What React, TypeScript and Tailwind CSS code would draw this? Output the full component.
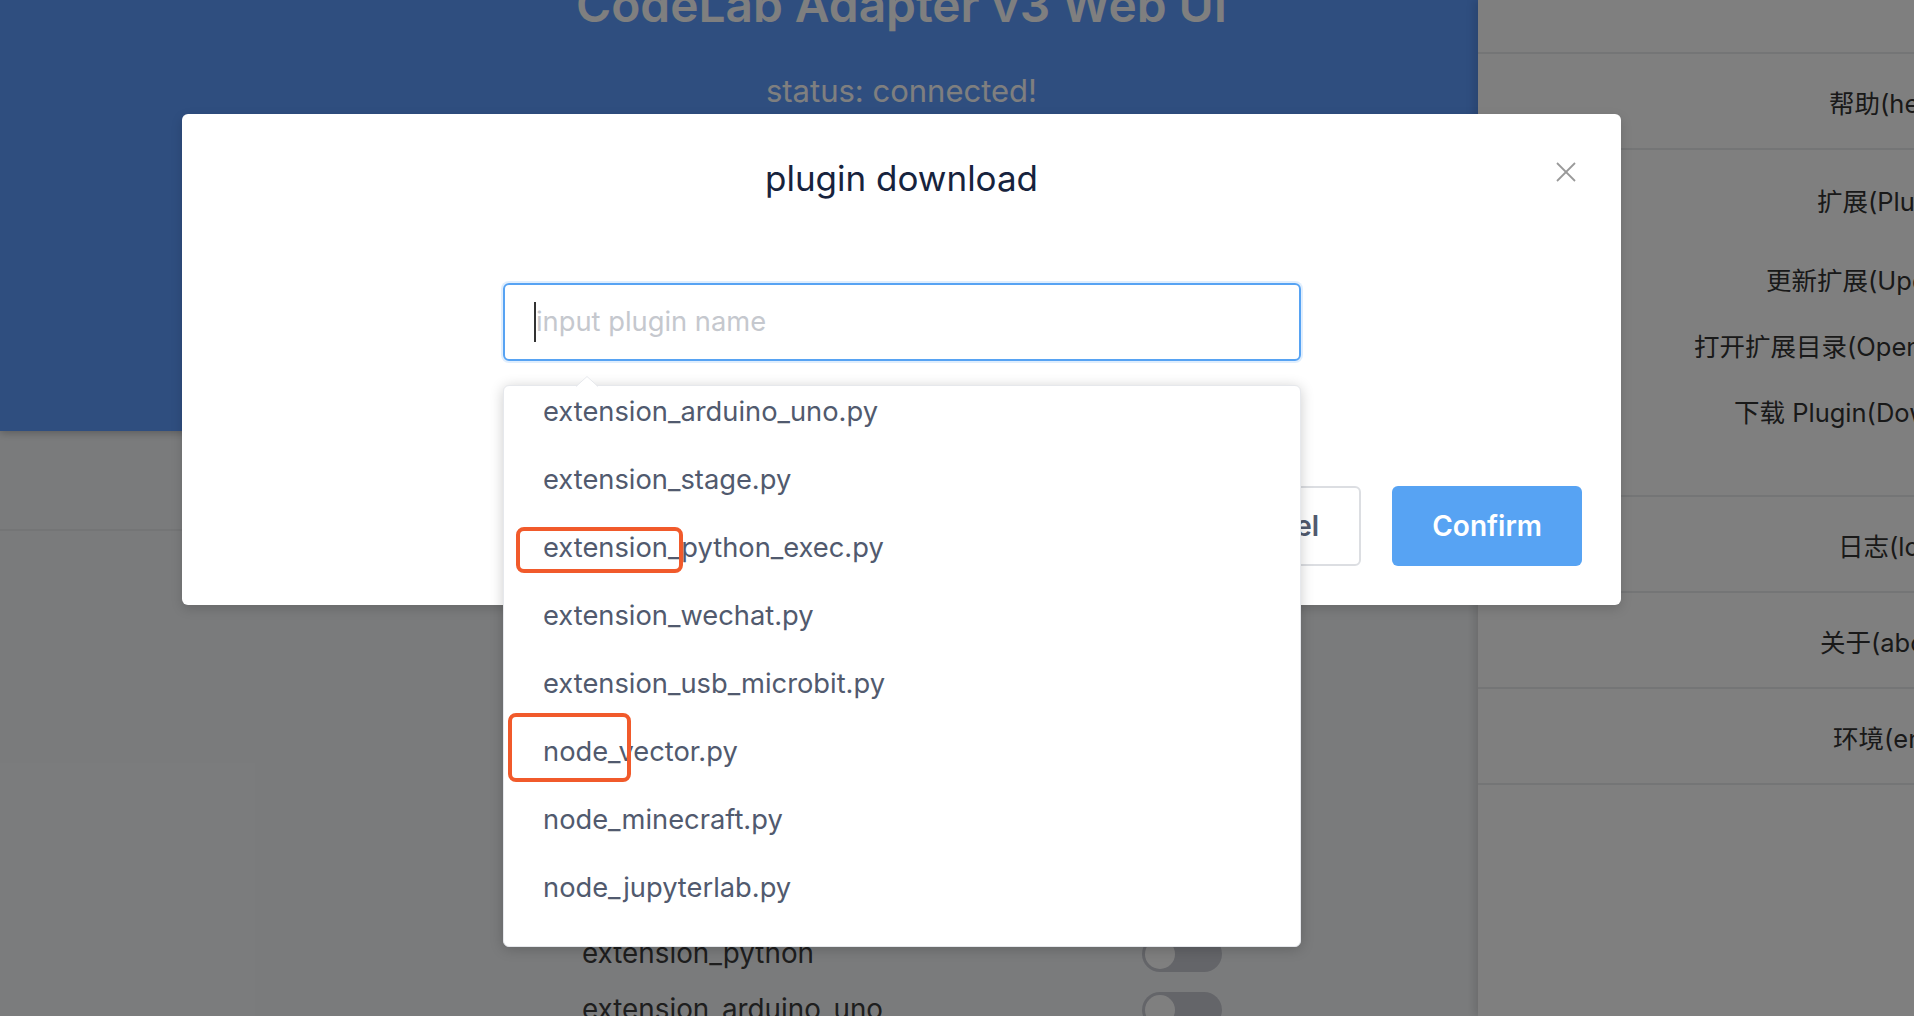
import React from "react";

const suggestions = [
  "extension_arduino_uno.py",
  "extension_stage.py",
  "extension_python_exec.py",
  "extension_wechat.py",
  "extension_usb_microbit.py",
  "node_vector.py",
  "node_minecraft.py",
  "node_jupyterlab.py",
];

const bgRows = [
  "extension_webUI_manager",
  "extension_eim",
  "extension_microbit",
  "extension_usb_microbit",
  "extension_stage",
  "extension_wechat",
  "extension_python_exec",
  "extension_python",
  "extension_arduino_uno",
];

function Toggle() {
  return (
    <div className="flex h-[36px] w-[80px] items-center rounded-full bg-[#c8cad2] p-[3px]">
      <div className="h-[30px] w-[30px] rounded-full bg-white" />
    </div>
  );
}

function SideRow({
  text,
  pl,
  h,
  border = true,
  pt = "",
}: {
  text: string;
  pl: string;
  h: string;
  border?: boolean;
  pt?: string;
}) {
  return (
    <div
      className={`flex shrink-0 items-center whitespace-nowrap ${h} ${pl} ${pt} ${
        border ? "border-b-2 border-[#e8eaec]" : ""
      }`}
    >
      {text}
    </div>
  );
}

export default function App() {
  return (
    <div className="relative flex h-[1016px] w-[1914px] overflow-hidden bg-white font-['Inter','Noto_Sans_CJK_SC',sans-serif]">
      {/* main area */}
      <main className="flex h-[1016px] w-[1478px] shrink-0 flex-col overflow-hidden bg-[#f5f7f9]">
        <header className="relative z-10 h-[431px] shrink-0 overflow-hidden bg-[#5e9cfe] shadow-[0_2px_8px_rgba(0,0,0,0.25)]">
          <div className="flex w-[1803px] flex-col items-center">
            <h1 className="-mt-[18px] whitespace-nowrap text-[47.8px] font-semibold leading-none text-white">
              CodeLab Adapter v3 Web UI
            </h1>
            <p className="mt-[45px] whitespace-nowrap text-[31px] leading-none text-white">status: connected!</p>
          </div>
        </header>
        <div className="h-[100px] shrink-0 border-b-2 border-[#e8eaec]" />
        <div className="flex shrink-0 flex-col pt-[3px]">
          {bgRows.map((r) => (
            <div key={r} className="flex h-[56px] shrink-0 items-center pl-[582px]">
              <span className="w-[560px] text-[27.8px] text-[#3d3d3d]">{r}</span>
              <Toggle />
            </div>
          ))}
        </div>
      </main>

      {/* sidebar */}
      <aside className="relative z-10 w-[436px] shrink-0 overflow-hidden bg-white text-[25.5px] text-[#333] shadow-[-4px_0_8px_rgba(0,0,0,0.12)]">
        <div className="h-[54px] border-b-2 border-[#e8eaec]" />
        <SideRow text="帮助(help)" pl="pl-[351px]" h="h-[96px]" pt="pt-[7px]" />
        <div className="flex h-[347px] flex-col border-b-2 border-[#e8eaec]">
          <SideRow text="扩展(Plugin)" pl="pl-[339px]" h="h-[98px]" border={false} pt="pt-[7px]" />
          <SideRow text="更新扩展(Update)" pl="pl-[288px]" h="h-[66px]" border={false} />
          <SideRow text="打开扩展目录(Open directory)" pl="pl-[216px]" h="h-[66px]" border={false} />
          <SideRow text="下载 Plugin(Download)" pl="pl-[256px]" h="h-[66px]" border={false} />
        </div>
        <SideRow text="日志(log)" pl="pl-[360px]" h="h-[96px]" pt="pt-[7px]" />
        <SideRow text="关于(about)" pl="pl-[342px]" h="h-[96px]" pt="pt-[7px]" />
        <SideRow text="环境(env)" pl="pl-[355px]" h="h-[96px]" pt="pt-[7px]" />
      </aside>

      {/* mask */}
      <div className="absolute inset-0 z-20 bg-black/50" />

      {/* modal */}
      <div className="absolute left-[182px] top-[114px] z-30 h-[491px] w-[1439px] rounded-[6px] bg-white shadow-[0_4px_12px_rgba(0,0,0,0.15)]">
        <div className="pt-[47px] text-center text-[35px] leading-none text-[#17233d]">plugin download</div>
        <button className="absolute left-[1374px] top-[48px] h-[20px] w-[20px]">
          <svg viewBox="0 0 20 20" className="h-[20px] w-[20px]" fill="none" stroke="#999" strokeWidth="1.8">
            <line x1="1" y1="1" x2="19" y2="19" />
            <line x1="19" y1="1" x2="1" y2="19" />
          </svg>
        </button>

        <div className="relative ml-[321px] mt-[87px] w-[798px]">
          <div className="flex h-[78px] items-center rounded-[6px] border-2 border-[#57a3f3] pl-[29px] shadow-[0_0_0_2px_rgba(45,140,240,0.15)]">
            <span className="h-[40px] w-[2px] bg-[#333]" />
            <span className="text-[27.3px] text-[#c5c8ce]">input plugin name</span>
          </div>

          {/* dropdown */}
          <div className="absolute left-0 top-[102px] z-10 h-[562px] w-[798px]">
            <svg className="absolute left-[72px] top-[-9px] z-10" width="24" height="11" viewBox="0 0 24 11">
              <polygon points="1,11 12,0 23,11" fill="white" />
              <polyline points="1,10.5 12,0.5 23,10.5" fill="none" stroke="#e6e8ec" strokeWidth="1" />
            </svg>
            <div className="h-full w-full overflow-hidden rounded-[6px] border border-[#e6e8ec] bg-white shadow-[0_2px_14px_rgba(0,0,0,0.2)]">
              <div className="-mt-[8px] flex flex-col">
                {suggestions.map((s) => (
                  <div key={s} className="flex h-[68px] shrink-0 items-center pl-[39px] text-[27.3px] text-[#515a6e]">
                    {s}
                  </div>
                ))}
              </div>
            </div>
          </div>
        </div>

        <div className="mt-[125px] flex justify-end gap-[31px] pr-[39px]">
          <button className="h-[80px] rounded-[6px] border-2 border-[#dcdee2] bg-white px-[40px] text-[28px] font-semibold text-[#515a6e]">
            Cancel
          </button>
          <button className="h-[80px] rounded-[6px] bg-[#57a3f3] px-[40px] text-[28px] font-semibold text-white">
            Confirm
          </button>
        </div>
      </div>

      {/* annotation boxes */}
      <div className="absolute left-[516px] top-[527px] z-40 h-[46px] w-[167px] rounded-[8px] border-4 border-[#f15a2b]" />
      <div className="absolute left-[508px] top-[713px] z-40 h-[69px] w-[123px] rounded-[8px] border-4 border-[#f15a2b]" />
    </div>
  );
}
